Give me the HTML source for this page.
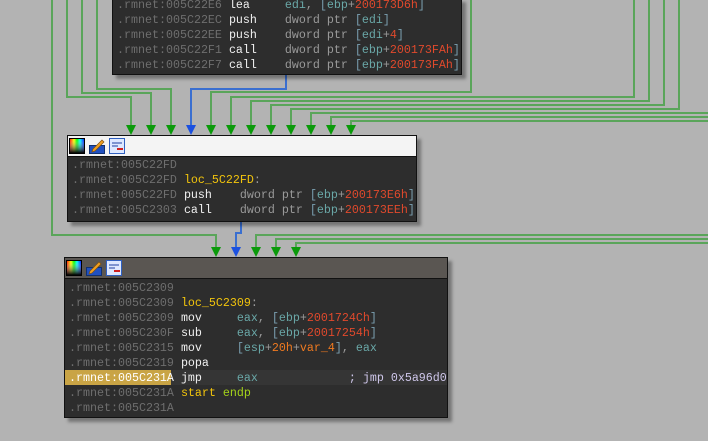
<!DOCTYPE html>
<html><head><meta charset="utf-8"><style>
body{margin:0;width:708px;height:441px;background:#b3b3b3;overflow:hidden;position:relative;font-family:"Liberation Mono","DejaVu Sans Mono",monospace;font-size:11.67px}
.box{position:absolute;background:#2d2d2d;border:1px solid #111;box-shadow:4px 4px 3px rgba(0,0,0,.35)}
.r{position:absolute;left:4px;height:15px;line-height:15px;white-space:pre;color:#dcdcdc}
.a{color:#6e6e6e}.m{color:#f0f0f0}.g{color:#9a9a9a}.b{color:#7a9fb0}.reg{color:#6aa8a8}.n{color:#e0492c}.y{color:#f2c40c}.e{color:#a4d21a}.o{color:#f07a20}.c{color:#d0c8ec}
.hdr{position:absolute;left:0;top:0;right:0;height:20px;border-bottom:1px solid #111}
.ic{position:absolute;top:2px;width:16px;height:16px}
</style></head><body>
<svg width="708" height="441" style="position:absolute;left:0;top:0">
<g fill="none" stroke="#5aa55a" stroke-width="2">
<path d="M52 0V235H216V248"/>
<path d="M67 0V97H131V126"/>
<path d="M82 0V93H151V126"/>
<path d="M97 0V89H171V126"/>
<path d="M471 0V92H211V126"/>
<path d="M634 0V97H231V126"/>
<path d="M649 0V101H251V126"/>
<path d="M664 0V105H271V126"/>
<path d="M679 0V109H291V126"/>
<path d="M708 113H311V126"/>
<path d="M708 117H331V126"/>
<path d="M708 121H351V126"/>
<path d="M708 235H256V248"/>
<path d="M708 239H276V248"/>
<path d="M708 243H296V248"/>
</g>
<g fill="none" stroke="#3a6fd0" stroke-width="2">
<path d="M286 74V89H191V126"/>
<path d="M241 221V233H236V248"/>
</g>
<g fill="#0a9a0a">
<path d="M126 125h10l-5 10z"/><path d="M146 125h10l-5 10z"/><path d="M166 125h10l-5 10z"/>
<path d="M206 125h10l-5 10z"/><path d="M226 125h10l-5 10z"/><path d="M246 125h10l-5 10z"/><path d="M266 125h10l-5 10z"/><path d="M286 125h10l-5 10z"/><path d="M306 125h10l-5 10z"/><path d="M326 125h10l-5 10z"/><path d="M346 125h10l-5 10z"/>
<path d="M211 247h10l-5 10z"/><path d="M251 247h10l-5 10z"/><path d="M271 247h10l-5 10z"/><path d="M291 247h10l-5 10z"/>
</g>
<g fill="#1a50e0"><path d="M186 125h10l-5 10z"/><path d="M231 247h10l-5 10z"/></g>
</svg>

<div class="box" style="left:112px;top:-2px;width:348px;height:75px">
<div class="r" style="top:-1px"><span class="a">.rmnet:005C22E6</span> <span class="m">lea</span>     <span class="reg">edi</span><span class="g">,</span> <span class="b">[</span><span class="reg">ebp</span><span class="g">+</span><span class="n">200173D6h</span><span class="b">]</span></div>
<div class="r" style="top:14px"><span class="a">.rmnet:005C22EC</span> <span class="m">push</span>    <span class="g">dword ptr</span> <span class="b">[</span><span class="reg">edi</span><span class="b">]</span></div>
<div class="r" style="top:29px"><span class="a">.rmnet:005C22EE</span> <span class="m">push</span>    <span class="g">dword ptr</span> <span class="b">[</span><span class="reg">edi</span><span class="g">+</span><span class="n">4</span><span class="b">]</span></div>
<div class="r" style="top:44px"><span class="a">.rmnet:005C22F1</span> <span class="m">call</span>    <span class="g">dword ptr</span> <span class="b">[</span><span class="reg">ebp</span><span class="g">+</span><span class="n">200173FAh</span><span class="b">]</span></div>
<div class="r" style="top:59px"><span class="a">.rmnet:005C22F7</span> <span class="m">call</span>    <span class="g">dword ptr</span> <span class="b">[</span><span class="reg">ebp</span><span class="g">+</span><span class="n">200173FAh</span><span class="b">]</span></div>
</div>

<div class="box" style="left:67px;top:135px;width:348px;height:85px">
<div class="hdr" style="background:#f4f4f4"></div>
<svg class="ic" style="left:1px" viewBox="0 0 16 16"><defs><linearGradient id="h1" x1="0" x2="1"><stop offset="0" stop-color="#f00"/><stop offset=".3" stop-color="#ff0"/><stop offset=".5" stop-color="#0f0"/><stop offset=".7" stop-color="#0ff"/><stop offset="1" stop-color="#00f"/></linearGradient><linearGradient id="v1" x1="0" y1="0" x2="0" y2="1"><stop offset="0" stop-color="#fff" stop-opacity="0"/><stop offset="1" stop-color="#000"/></linearGradient></defs><rect x=".5" y=".5" width="15" height="15" fill="url(#h1)" stroke="#000"/><rect x="1" y="1" width="14" height="14" fill="url(#v1)"/></svg>
<svg class="ic" style="left:21px" viewBox="0 0 16 16"><rect x=".5" y="7.5" width="15" height="8" fill="#2050c0" stroke="#103070"/><path d="M4 11L13 2l2 2-9 9-3 1z" fill="#f0a020" stroke="#805010" stroke-width=".7"/></svg>
<svg class="ic" style="left:41px" viewBox="0 0 16 16"><rect x=".5" y=".5" width="15" height="15" fill="#dde8ff" stroke="#3060c0"/><path d="M3 5h10M3 8h6M8 11h6" stroke="#2040a0"/><rect x="8" y="10" width="6" height="2" fill="#d02020"/></svg>
<div class="r" style="top:22px"><span class="a">.rmnet:005C22FD</span></div>
<div class="r" style="top:37px"><span class="a">.rmnet:005C22FD</span> <span class="y">loc_5C22FD</span><span class="g">:</span></div>
<div class="r" style="top:52px"><span class="a">.rmnet:005C22FD</span> <span class="m">push</span>    <span class="g">dword ptr</span> <span class="b">[</span><span class="reg">ebp</span><span class="g">+</span><span class="n">200173E6h</span><span class="b">]</span></div>
<div class="r" style="top:67px"><span class="a">.rmnet:005C2303</span> <span class="m">call</span>    <span class="g">dword ptr</span> <span class="b">[</span><span class="reg">ebp</span><span class="g">+</span><span class="n">200173EEh</span><span class="b">]</span></div>
</div>

<div class="box" style="left:64px;top:257px;width:382px;height:159px">
<div class="hdr" style="background:#5a5652"></div>
<svg class="ic" style="left:1px" viewBox="0 0 16 16"><rect x=".5" y=".5" width="15" height="15" fill="url(#h1)" stroke="#000"/><rect x="1" y="1" width="14" height="14" fill="url(#v1)"/></svg>
<svg class="ic" style="left:21px" viewBox="0 0 16 16"><rect x=".5" y="7.5" width="15" height="8" fill="#2050c0" stroke="#103070"/><path d="M4 11L13 2l2 2-9 9-3 1z" fill="#f0a020" stroke="#805010" stroke-width=".7"/></svg>
<svg class="ic" style="left:41px" viewBox="0 0 16 16"><rect x=".5" y=".5" width="15" height="15" fill="#dde8ff" stroke="#3060c0"/><path d="M3 5h10M3 8h6M8 11h6" stroke="#2040a0"/><rect x="8" y="10" width="6" height="2" fill="#d02020"/></svg>
<div style="position:absolute;left:0;right:0;top:112px;height:15px;background:#353535"></div>
<div style="position:absolute;left:0;width:106px;top:112px;height:15px;background:#c9a445"></div>
<div class="r" style="top:23px"><span class="a">.rmnet:005C2309</span></div>
<div class="r" style="top:38px"><span class="a">.rmnet:005C2309</span> <span class="y">loc_5C2309</span><span class="g">:</span></div>
<div class="r" style="top:53px"><span class="a">.rmnet:005C2309</span> <span class="m">mov</span>     <span class="reg">eax</span><span class="g">,</span> <span class="b">[</span><span class="reg">ebp</span><span class="g">+</span><span class="n">2001724Ch</span><span class="b">]</span></div>
<div class="r" style="top:68px"><span class="a">.rmnet:005C230F</span> <span class="m">sub</span>     <span class="reg">eax</span><span class="g">,</span> <span class="b">[</span><span class="reg">ebp</span><span class="g">+</span><span class="n">20017254h</span><span class="b">]</span></div>
<div class="r" style="top:83px"><span class="a">.rmnet:005C2315</span> <span class="m">mov</span>     <span class="b">[</span><span class="reg">esp</span><span class="g">+</span><span class="o">20h</span><span class="g">+</span><span class="o">var_4</span><span class="b">]</span><span class="g">,</span> <span class="reg">eax</span></div>
<div class="r" style="top:98px"><span class="a">.rmnet:005C2319</span> <span class="m">popa</span></div>
<div class="r" style="top:113px"><span style="color:#fff">.rmnet:005C231A</span> <span class="m">jmp</span>     <span class="reg">eax</span>             <span class="c">; jmp 0x5a96d0</span></div>
<div class="r" style="top:128px"><span class="a">.rmnet:005C231A</span> <span class="y">start</span> <span class="e">endp</span></div>
<div class="r" style="top:143px"><span class="a">.rmnet:005C231A</span></div>
</div>
</body></html>
